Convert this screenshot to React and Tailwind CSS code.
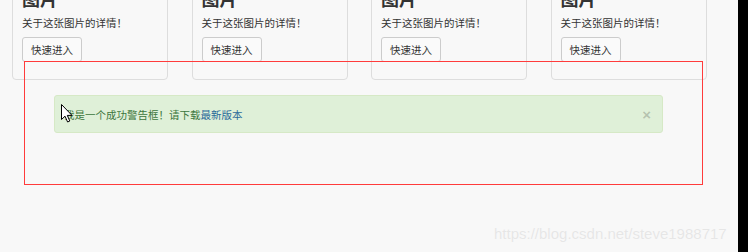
import React from "react";

const cards = [1, 2, 3, 4];

const Cursor = () => (
  <svg
    width="12"
    height="19"
    viewBox="0 0 12 19"
    className="absolute left-[61px] top-[104px]"
  >
    <path
      d="M0.5 0.5 L0.5 15.5 L4 12.2 L6.6 18 L8.8 17 L6.3 11.4 L11 11.4 Z"
      fill="#ffffff"
      stroke="#000000"
      strokeWidth="1"
      strokeLinejoin="round"
    />
  </svg>
);

const Card = () => (
  <div className="w-[156px] shrink-0 border border-[#dddddd] rounded-[4px] px-[9px] pt-[7px] pb-[17px]">
    <h3 className="text-[18px] leading-[20px] font-bold text-[#333333] mb-[7px]">
      图片
    </h3>
    <p className="text-[10.5px] leading-[15px] text-[#333333] mb-[7px]">
      关于这张图片的详情！
    </p>
    <button className="block h-[25px] w-[60px] border border-[#cccccc] rounded-[3px] bg-[#fafafa] text-[10.5px] text-[#333333]">
      快速进入
    </button>
  </div>
);

export default function App() {
  return (
    <div
      className="flex w-[748px] h-[252px] overflow-hidden bg-[#f8f8f8]"
      style={{ fontFamily: '"Noto Sans CJK SC", "Liberation Sans", sans-serif' }}
    >
      <div className="relative w-[738px] h-full">
        <div className="flex gap-[23.5px] pl-[12px] -mt-[20px]">
          {cards.map((c) => (
            <Card key={c} />
          ))}
        </div>

        {/* alert */}
        <div className="mt-[15px] ml-[54px] w-[609px] h-[38px] flex items-center justify-between pl-[9px] pr-[11px] bg-[#dff0d8] border border-[#d6e9c6] rounded-[3px]">
          <span className="text-[10.5px] leading-[15px] text-[#3c763d]">
            我是一个成功警告框！请下载
            <a className="text-[#2b6a9a]">最新版本</a>
          </span>
          <span className="font-['Liberation_Sans',sans-serif] text-[15px] leading-none font-bold text-black/20">×</span>
        </div>

        {/* red annotation box */}
        <div className="absolute left-[24px] top-[61px] w-[679px] h-[124px] border border-[#ff3b3b]" />

        <Cursor />

        {/* watermark */}
        <div className="absolute left-[494px] top-[225px] font-['Liberation_Sans',sans-serif] text-[15px] leading-[18px] whitespace-nowrap text-[#e6e6e6] [text-shadow:0_0_1px_#ffffff]">
          https://blog.csdn.net/steve1988717
        </div>
      </div>
      <div className="w-[10px] h-full bg-black" />
    </div>
  );
}
